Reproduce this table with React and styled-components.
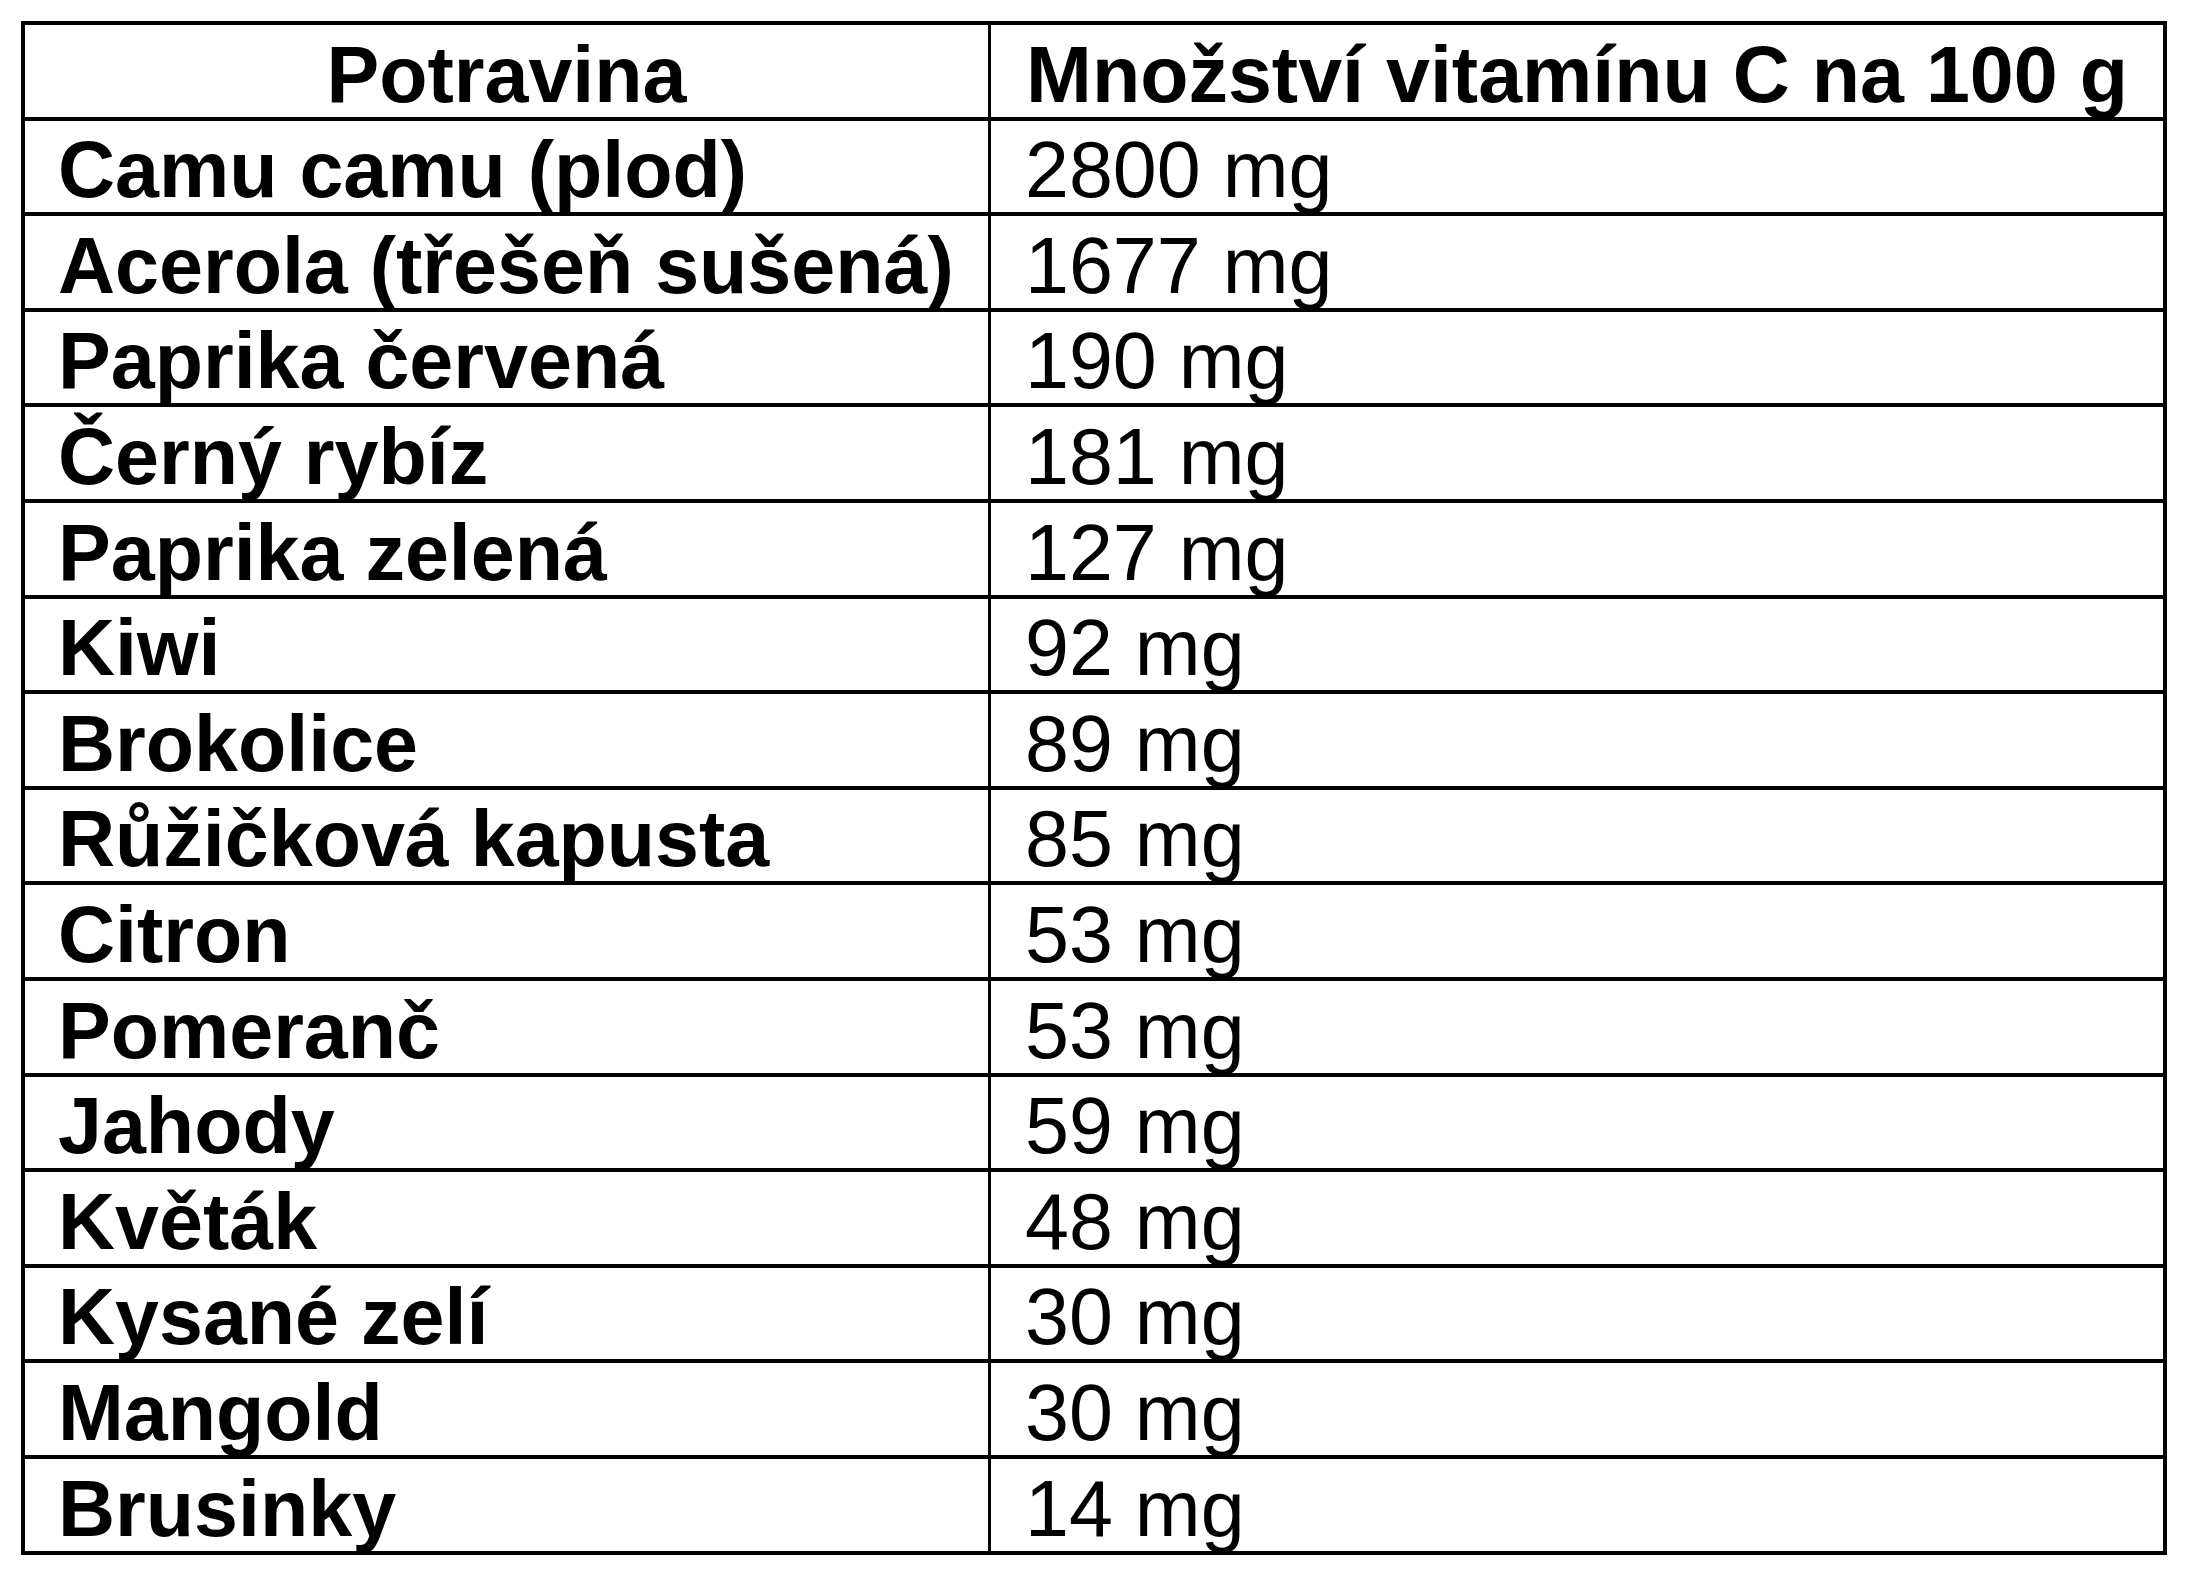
import React from 'react';
import styled, { createGlobalStyle } from 'styled-components';

const GlobalStyle = createGlobalStyle`
	html, body {
		margin: 0;
		padding: 0;
		background: #ffffff;
	}
`;

const Page = styled.div`
	padding: 21px;
	background: #ffffff;
	font-family: 'Liberation Sans', Arial, sans-serif;
	color: #000000;
`;

// black background + gaps draw the grid lines
const Table = styled.div`
	display: grid;
	grid-template-columns: 963px 1fr;
	grid-auto-rows: 91.6px;
	row-gap: 4px;
	column-gap: 3px;
	padding: 4px;
	background: #000000;
`;

const Cell = styled.div`
	display: flex;
	align-items: flex-end;
	justify-content: ${(p) => (p.$head ? 'center' : 'flex-start')};
	padding-left: ${(p) => (p.$head ? '0' : p.$value ? '34px' : '33px')};
	background: #ffffff;
	font-size: 79px;
	line-height: 88px;
	font-weight: ${(p) => (p.$value ? 400 : 700)};
	white-space: nowrap;
`;

const Text = styled.span`
	display: block;
	margin-bottom: -2px;
`;

const rows = [
	['Camu camu (plod)', '2800 mg'],
	['Acerola (třešeň sušená)', '1677 mg'],
	['Paprika červená', '190 mg'],
	['Černý rybíz', '181 mg'],
	['Paprika zelená', '127 mg'],
	['Kiwi', '92 mg'],
	['Brokolice', '89 mg'],
	['Růžičková kapusta', '85 mg'],
	['Citron', '53 mg'],
	['Pomeranč', '53 mg'],
	['Jahody', '59 mg'],
	['Květák', '48 mg'],
	['Kysané zelí', '30 mg'],
	['Mangold', '30 mg'],
	['Brusinky', '14 mg'],
];

export default function App() {
	return (
		<>
			<GlobalStyle />
			<Page>
				<Table>
					<Cell $head><Text>Potravina</Text></Cell>
					<Cell $head><Text>Množství vitamínu C na 100 g</Text></Cell>
					{rows.map(([food, amount]) => (
						<React.Fragment key={food}>
							<Cell><Text>{food}</Text></Cell>
							<Cell $value><Text>{amount}</Text></Cell>
						</React.Fragment>
					))}
				</Table>
			</Page>
		</>
	);
}
